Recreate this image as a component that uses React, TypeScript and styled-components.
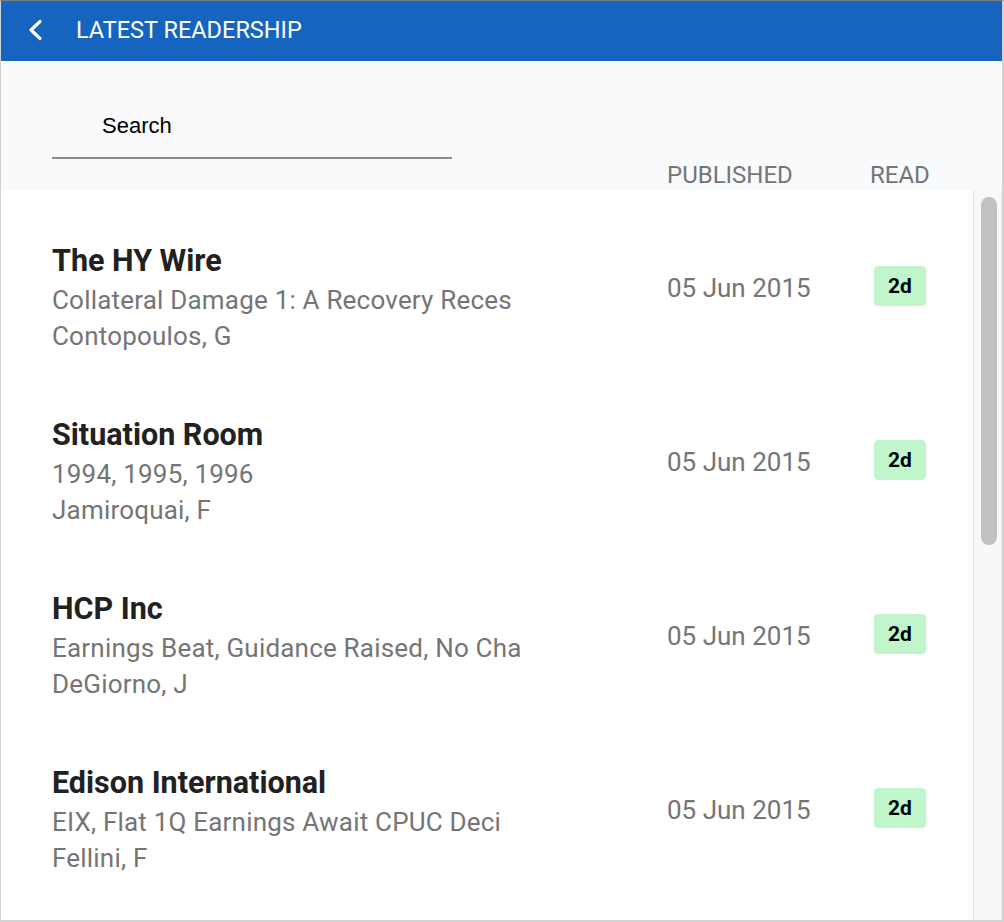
import React from 'react';
import styled, { createGlobalStyle } from 'styled-components';

const GlobalStyle = createGlobalStyle`
  html, body {
    margin: 0;
    padding: 0;
    background: #ffffff;
  }
  * {
    box-sizing: border-box;
  }
`;

const Frame = styled.div`
  width: 1004px;
  height: 922px;
  display: flex;
  flex-direction: column;
  border: 1px solid #d2d2d2;
  border-top-color: #7d7d7d;
  border-right-width: 2px;
  border-bottom-width: 2px;
  background: #ffffff;
  font-family: Roboto, 'Noto Sans', sans-serif;
  overflow: hidden;
`;

const Header = styled.header`
  height: 60px;
  flex: none;
  display: flex;
  align-items: center;
  padding: 0 0 2px 25px;
  background: #1565c0;
  color: #ffffff;
`;

const BackButton = styled.button`
  width: 18px;
  height: 24px;
  padding: 0;
  margin-right: 32px;
  border: none;
  background: transparent;
  color: inherit;
  display: flex;
  align-items: center;
  justify-content: center;
  cursor: pointer;
`;

const Title = styled.h1`
  margin: 0;
  font-size: 23.5px;
  font-weight: 400;
`;

const Toolbar = styled.div`
  height: 129px;
  flex: none;
  display: grid;
  grid-template-columns: 615px 203px 1fr;
  padding-left: 51px;
  background: #f9fafc;
`;

const SearchInput = styled.input`
  align-self: start;
  margin-top: 52px;
  width: 400px;
  height: 46px;
  padding: 0 0 18px 50px;
  border: none;
  border-bottom: 2px solid #8a8a8a;
  background: transparent;
  outline: none;
  font-family: 'Liberation Sans', Arial, sans-serif;
  font-size: 22px;
  line-height: 26px;
  color: #000000;

  &::placeholder {
    color: #000000;
    opacity: 1;
  }
`;

const ColumnLabel = styled.div`
  align-self: end;
  margin-bottom: 1px;
  font-size: 24px;
  line-height: 28px;
  color: #757575;
`;

const ListArea = styled.div`
  flex: 1;
  min-height: 0;
  display: flex;
`;

const List = styled.div`
  flex: 1;
  overflow: hidden;
  padding-top: 22px;
`;

const ScrollTrack = styled.div`
  width: 29px;
  flex: none;
  padding: 7px 5px 0 7px;
  background: #f8f8f8;
  border-left: 1px solid #e4e4e4;
  border-right: 1px solid #ececec;
`;

const ScrollThumb = styled.div`
  width: 16px;
  height: 348px;
  border-radius: 8px;
  background: #c1c1c1;
`;

const Row = styled.div`
  display: grid;
  grid-template-columns: 615px 203px 60px;
  align-items: start;
  padding: 31px 0 32px 51px;
`;

const Info = styled.div`
  display: flex;
  flex-direction: column;
  min-width: 0;
`;

const Name = styled.div`
  margin-bottom: 3px;
  font-size: 30.5px;
  font-weight: 700;
  line-height: 36px;
  color: #212121;
`;

const Meta = styled.div`
  font-size: 26px;
  line-height: 36px;
  letter-spacing: 0.2px;
  color: #757575;
  white-space: nowrap;
`;

const DateCell = styled.div`
  margin-top: 27px;
  font-size: 26px;
  line-height: 36px;
  color: #757575;
`;

const ReadCell = styled.div`
  display: flex;
  justify-content: center;
  margin-top: 23px;
`;

const Badge = styled.span`
  width: 52px;
  height: 40px;
  display: flex;
  align-items: center;
  justify-content: center;
  border-radius: 4px;
  background: #c1f5cb;
  color: #000000;
  font-size: 21px;
  font-weight: 700;
`;

const items = [
  { name: 'The HY Wire', title: 'Collateral Damage 1: A Recovery Reces', author: 'Contopoulos, G' },
  { name: 'Situation Room', title: '1994, 1995, 1996', author: 'Jamiroquai, F' },
  { name: 'HCP Inc', title: 'Earnings Beat, Guidance Raised, No Cha', author: 'DeGiorno, J' },
  { name: 'Edison International', title: 'EIX, Flat 1Q Earnings Await CPUC Deci', author: 'Fellini, F' },
];

function ChevronLeft() {
  return (
    <svg width="16" height="22" viewBox="0 0 16 22" fill="none">
      <polyline
        points="13,2.5 4,11 13,19.5"
        stroke="currentColor"
        strokeWidth="3.2"
        strokeLinecap="round"
        strokeLinejoin="round"
      />
    </svg>
  );
}

function App() {
  return (
    <>
      <GlobalStyle />
      <Frame>
        <Header>
          <BackButton aria-label="Back">
            <ChevronLeft />
          </BackButton>
          <Title>LATEST READERSHIP</Title>
        </Header>
        <Toolbar>
          <SearchInput placeholder="Search" />
          <ColumnLabel>PUBLISHED</ColumnLabel>
          <ColumnLabel>READ</ColumnLabel>
        </Toolbar>
        <ListArea>
          <List>
            {items.map((item) => (
              <Row key={item.name}>
                <Info>
                  <Name>{item.name}</Name>
                  <Meta>{item.title}</Meta>
                  <Meta>{item.author}</Meta>
                </Info>
                <DateCell>05 Jun 2015</DateCell>
                <ReadCell>
                  <Badge>2d</Badge>
                </ReadCell>
              </Row>
            ))}
          </List>
          <ScrollTrack>
            <ScrollThumb />
          </ScrollTrack>
        </ListArea>
      </Frame>
    </>
  );
}

export default App;
